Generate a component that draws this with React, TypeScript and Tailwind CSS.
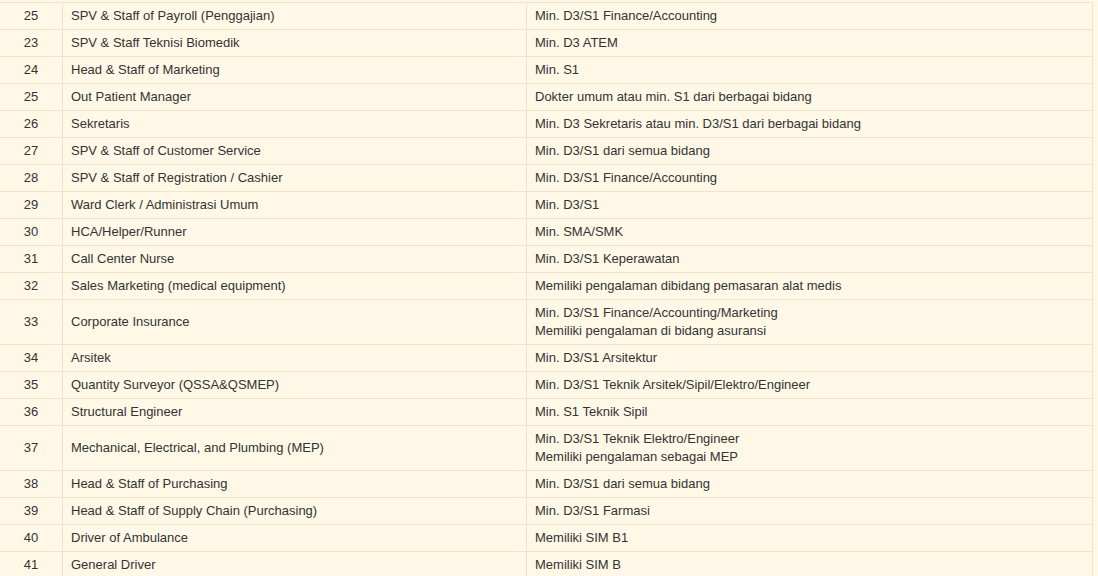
const rows: { no: string; posisi: string; syarat: string[] }[] = [
  { no: "25", posisi: "SPV & Staff of Payroll (Penggajian)", syarat: ["Min. D3/S1 Finance/Accounting"] },
  { no: "23", posisi: "SPV & Staff Teknisi Biomedik", syarat: ["Min. D3 ATEM"] },
  { no: "24", posisi: "Head & Staff of Marketing", syarat: ["Min. S1"] },
  { no: "25", posisi: "Out Patient Manager", syarat: ["Dokter umum atau min. S1 dari berbagai bidang"] },
  { no: "26", posisi: "Sekretaris", syarat: ["Min. D3 Sekretaris atau min. D3/S1 dari berbagai bidang"] },
  { no: "27", posisi: "SPV & Staff of Customer Service", syarat: ["Min. D3/S1 dari semua bidang"] },
  { no: "28", posisi: "SPV & Staff of Registration / Cashier", syarat: ["Min. D3/S1 Finance/Accounting"] },
  { no: "29", posisi: "Ward Clerk / Administrasi Umum", syarat: ["Min. D3/S1"] },
  { no: "30", posisi: "HCA/Helper/Runner", syarat: ["Min. SMA/SMK"] },
  { no: "31", posisi: "Call Center Nurse", syarat: ["Min. D3/S1 Keperawatan"] },
  { no: "32", posisi: "Sales Marketing (medical equipment)", syarat: ["Memiliki pengalaman dibidang pemasaran alat medis"] },
  {
    no: "33",
    posisi: "Corporate Insurance",
    syarat: ["Min. D3/S1 Finance/Accounting/Marketing", "Memiliki pengalaman di bidang asuransi"],
  },
  { no: "34", posisi: "Arsitek", syarat: ["Min. D3/S1 Arsitektur"] },
  { no: "35", posisi: "Quantity Surveyor (QSSA&QSMEP)", syarat: ["Min. D3/S1 Teknik Arsitek/Sipil/Elektro/Engineer"] },
  { no: "36", posisi: "Structural Engineer", syarat: ["Min. S1 Teknik Sipil"] },
  {
    no: "37",
    posisi: "Mechanical, Electrical, and Plumbing (MEP)",
    syarat: ["Min. D3/S1 Teknik Elektro/Engineer", "Memiliki pengalaman sebagai MEP"],
  },
  { no: "38", posisi: "Head & Staff of Purchasing", syarat: ["Min. D3/S1 dari semua bidang"] },
  { no: "39", posisi: "Head & Staff of Supply Chain (Purchasing)", syarat: ["Min. D3/S1 Farmasi"] },
  { no: "40", posisi: "Driver of Ambulance", syarat: ["Memiliki SIM B1"] },
  { no: "41", posisi: "General Driver", syarat: ["Memiliki SIM B"] },
];

export default function App() {
  return (
    <div className="h-[576px] w-[1098px] overflow-hidden bg-[#fff8e6] pt-[2px] font-['Liberation_Sans',Arial,sans-serif] text-[13px] leading-[18px] text-[#333333]">
      <table className="ml-[-1px] w-[1094px] table-fixed border-collapse">
        <colgroup>
          <col className="w-[63px]" />
          <col className="w-[464px]" />
          <col />
        </colgroup>
        <tbody>
          {rows.map((r, i) => (
            <tr key={i}>
              <td className="border border-[#eee5cb] px-2 py-1 text-center align-middle">{r.no}</td>
              <td className="border border-[#eee5cb] px-2 py-1 align-middle">{r.posisi}</td>
              <td className="border border-[#eee5cb] px-2 py-1 align-middle">
                {r.syarat.map((s, j) => (
                  <div key={j}>{s}</div>
                ))}
              </td>
            </tr>
          ))}
        </tbody>
      </table>
    </div>
  );
}
